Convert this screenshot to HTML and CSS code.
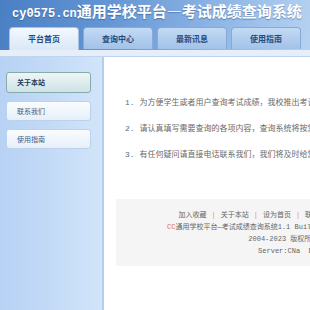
FILE: index.html
```html
<!DOCTYPE html>
<html lang="zh-CN">
<head>
  <meta charset="UTF-8">
  <meta name="viewport" content="width=device-width, initial-scale=1.0">
  <title>考试成绩查询系统</title>
  <link rel="stylesheet" href="styles.css">
</head>
<body>
  <div class="header">
    <h1 class="site-title"><span class="site-domain">cy0575.cn</span>通用学校平台—考试成绩查询系统</h1>
    <div class="tabs">
      <a href="#" class="tab active">平台首页</a>
      <a href="#" class="tab">查询中心</a>
      <a href="#" class="tab">最新讯息</a>
      <a href="#" class="tab">使用指南</a>
    </div>
  </div>
  <div class="strip"></div>

  <div class="layout">
    <div class="sidebar">
      <a href="#" class="side-btn active">关于本站</a>
      <a href="#" class="side-btn">联系我们</a>
      <a href="#" class="side-btn">使用指南</a>
    </div>

    <div class="main-content">
      <ul class="notice-list">
        <li>1. 为方便学生或者用户查询考试成绩，我校推出考试成绩查询系统。</li>
        <li>2. 请认真填写需要查询的各项内容，查询系统将按您填写的内容进行查询。</li>
        <li>3. 有任何疑问请直接电话联系我们，我们将及时给您解答。</li>
      </ul>

      <div class="footer">
        <p class="footer-links">
          <a href="#">加入收藏</a><span class="sep">|</span><a href="#">关于本站</a><span class="sep">|</span><a href="#">设为首页</a><span class="sep">|</span><a href="#">联系我们</a><span class="sep">|</span><a href="#">管理登录</a><span class="sep">|</span><a href="#">友情链接</a>
        </p>
        <p><span class="cc">CC</span>通用学校平台—考试成绩查询系统1.1 Build 20231018 Powered by CY0575</p>
        <p>2004-2023 版权所有 cy0575</p>
        <p>Server:CNa &nbsp;DT:21ms</p>
      </div>
    </div>
  </div>
</body>
</html>
```

FILE: styles.css
```css
:root {
  --tab-text: #24497a;
  --side-border: #bcd1ea;
  --text-grey: #6a6a6a;
}

html, body {
  margin: 0;
  padding: 0;
}

body {
  width: 310px;
  height: 310px;
  overflow: hidden;
  display: flex;
  flex-direction: column;
  font-family: "Liberation Mono", "Noto Sans CJK SC", monospace;
  background-color: white;
}

a {
  text-decoration: none;
  color: inherit;
}

.header {
  height: 50px;
  background: linear-gradient(100deg, #4a7fc4 0%, #6596d4 35%, #8fb6e6 70%, #b6d2f2 100%);
  overflow: hidden;
}

.site-title {
  margin: 0;
  padding: 2px 0 0 12px;
  height: 23px;
  font-family: "Noto Sans CJK SC", sans-serif;
  font-size: 15px;
  line-height: 18px;
  font-weight: bold;
  color: white;
  white-space: nowrap;
  text-shadow: 0 1px 1px rgba(30, 60, 110, 0.45);
}

.site-domain {
  font-family: "Liberation Mono", monospace;
  font-size: 12px;
}

.tabs {
  display: flex;
  gap: 4px;
  padding-left: 9px;
  margin-top: 2px;
}

.tab {
  width: 68px;
  height: 21px;
  border: 1px solid #86a9d6;
  border-bottom: none;
  border-radius: 4px 4px 0 0;
  background: linear-gradient(#c2daf4, #a2c2e9);
  color: var(--tab-text);
  font-family: "Noto Sans CJK SC", sans-serif;
  font-size: 8px;
  font-weight: bold;
  line-height: 21px;
  text-align: center;
}

.tab.active {
  height: 23px;
  border-color: #a7c2e3;
  background: linear-gradient(#f3f8fd, #d8e7f7);
}

.strip {
  height: 6px;
  background-color: #e6eff9;
  border-bottom: 1px solid #bfd4ed;
}

.layout {
  flex: 1;
  display: flex;
}

.sidebar {
  width: 104px;
  flex: none;
  padding-top: 15px;
  display: flex;
  flex-direction: column;
  gap: 8px;
  background: linear-gradient(to right, #b7d2f5, #c6dcf7 60%, #d1e4f9 97%);
  border-right: 2px solid #b3cff0;
  box-sizing: border-box;
}

.side-btn {
  margin-left: 6px;
  width: 85px;
  height: 20px;
  box-sizing: border-box;
  border: 1px solid var(--side-border);
  border-radius: 3px;
  background: linear-gradient(#fafcfe, #e6eff9);
  padding-left: 10px;
  font-family: "Noto Sans CJK SC", sans-serif;
  font-size: 7px;
  line-height: 18px;
  color: #3f5f8a;
}

.side-btn.active {
  height: 21px;
  border-color: #86abab;
  background: linear-gradient(#eef6f6, #cfe2e6);
  color: #1d3b5c;
  font-weight: bold;
}

.main-content {
  width: 388px;
  flex: none;
  background-color: white;
}

.notice-list {
  list-style: none;
  margin: 0;
  padding: 41px 0 0 21px;
}

.notice-list li {
  font-size: 8px;
  line-height: 10px;
  height: 26px;
  color: var(--text-grey);
  white-space: nowrap;
}

.footer {
  margin: 23px 12px 0;
  padding: 10px 0 9px;
  background-color: #f5f5f5;
  text-align: center;
  font-size: 7px;
  color: #666;
}

.footer p {
  margin: 0;
  line-height: 12px;
  white-space: nowrap;
}

.sep {
  color: #e58585;
  margin: 0 5px;
}

.cc {
  color: #d9704a;
}
```
